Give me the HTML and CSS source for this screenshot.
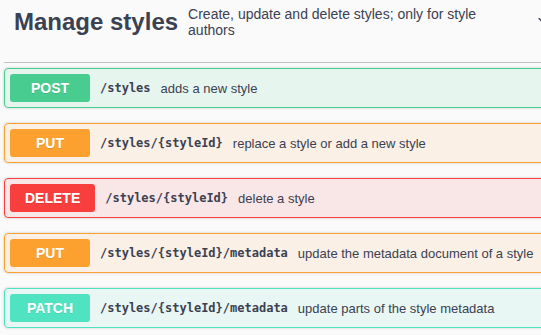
FILE: index.html
```html
<!DOCTYPE html>
<html>
<head>
    <title>Manage styles</title>
    <link rel="stylesheet" href="styles.css">
</head>
<body>
    <div class="tag-section">
        <div class="tag-header">
            <span class="tag-title">Manage styles</span>
            <div class="tag-desc">
                <p>Create, update and delete styles; only for style authors</p>
            </div>
            <button class="expand-btn" aria-label="Expand">
                <svg width="20" height="20" viewBox="0 0 20 20">
                    <path d="M17.418 6.109c.272-.268.709-.268.979 0s.271.701 0 .969l-7.908 7.83c-.27.268-.707.268-.979 0l-7.908-7.83c-.27-.268-.27-.701 0-.969.271-.268.709-.268.979 0L10 13.25l7.418-7.141z" fill="#3b4151"/>
                </svg>
            </button>
        </div>

        <div class="opblock opblock-post">
            <span class="method">POST</span>
            <span class="path">/styles</span>
            <span class="summary">adds a new style</span>
        </div>
        <div class="opblock opblock-put">
            <span class="method">PUT</span>
            <span class="path">/styles/{styleId}</span>
            <span class="summary">replace a style or add a new style</span>
        </div>
        <div class="opblock opblock-delete">
            <span class="method">DELETE</span>
            <span class="path">/styles/{styleId}</span>
            <span class="summary">delete a style</span>
        </div>
        <div class="opblock opblock-put">
            <span class="method">PUT</span>
            <span class="path">/styles/{styleId}/metadata</span>
            <span class="summary">update the metadata document of a style</span>
        </div>
        <div class="opblock opblock-patch">
            <span class="method">PATCH</span>
            <span class="path">/styles/{styleId}/metadata</span>
            <span class="summary">update parts of the style metadata</span>
        </div>
    </div>
</body>
</html>
```

FILE: styles.css
```css
* {
    margin: 0;
    padding: 0;
    box-sizing: border-box;
}

body {
    background: #fafafa;
    font-family: "Liberation Sans", Arial, sans-serif;
    color: #3b4151;
    overflow: hidden;
}

.tag-section {
    width: 573px;
    margin-left: 4px;
}

.tag-header {
    display: flex;
    align-items: center;
    padding: 6px 20px 24px 10px;
    border-bottom: 1px solid rgba(59, 65, 81, 0.3);
    margin-bottom: 5px;
}

.tag-title {
    font-size: 24px;
    font-weight: bold;
    white-space: nowrap;
}

.tag-desc {
    flex: 1;
    padding: 0 10px;
    font-size: 14px;
}

.tag-desc p {
    max-width: 300px;
}

.expand-btn {
    border: none;
    background: none;
    width: 20px;
    height: 20px;
    display: flex;
}

.opblock {
    display: flex;
    align-items: center;
    padding: 5px;
    margin-bottom: 15px;
    border: 1px solid;
    border-radius: 4px;
    box-shadow: 0 0 3px rgba(0, 0, 0, 0.19);
}

.method {
    min-width: 80px;
    padding: 6px 15px;
    border-radius: 3px;
    font-size: 14px;
    font-weight: bold;
    text-align: center;
    color: #fff;
    text-shadow: 0 1px 0 rgba(0, 0, 0, 0.1);
}

.path {
    padding: 0 10px;
    font-family: "DejaVu Sans Mono", monospace;
    font-size: 12px;
    font-weight: 600;
    white-space: nowrap;
}

.summary {
    font-size: 13px;
    white-space: nowrap;
}

.opblock-post {
    border-color: #49cc90;
    background: rgba(73, 204, 144, 0.1);
}

.opblock-post .method {
    background: #49cc90;
}

.opblock-put {
    border-color: #fca130;
    background: rgba(252, 161, 48, 0.1);
}

.opblock-put .method {
    background: #fca130;
}

.opblock-delete {
    border-color: #f93e3e;
    background: rgba(249, 62, 62, 0.1);
}

.opblock-delete .method {
    background: #f93e3e;
}

.opblock-patch {
    border-color: #50e3c2;
    background: rgba(80, 227, 194, 0.1);
}

.opblock-patch .method {
    background: #50e3c2;
}
```
